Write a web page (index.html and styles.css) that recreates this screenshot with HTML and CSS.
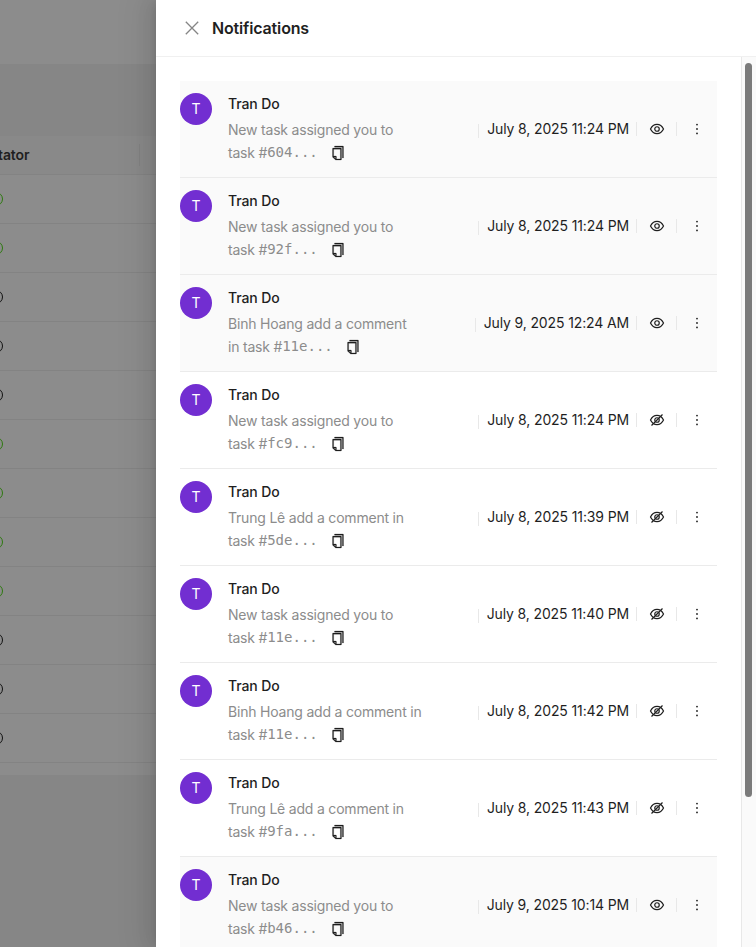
FILE: index.html
```html
<!DOCTYPE html>
<html lang="en">
<head>
<meta charset="utf-8">
<title>Notifications</title>
<link rel="stylesheet" href="styles.css">
</head>
<body>
<svg class="defs" aria-hidden="true">
  <symbol id="copy" viewBox="0 0 1024 1024"><path stroke="currentColor" stroke-width="14" d="M832 64H296c-4.400 0-8 3.600-8 8v56c0 4.400 3.600 8 8 8h496v688c0 4.400 3.600 8 8 8h56c4.400 0 8-3.600 8-8V96c0-17.700-14.300-32-32-32zM704 192H192c-17.700 0-32 14.300-32 32v530.700c0 8.500 3.400 16.600 9.400 22.600l173.300 173.300c2.200 2.200 4.700 4 7.400 5.500v1.900h4.200c3.500 1.300 7.200 2 11 2H704c17.700 0 32-14.300 32-32V224c0-17.700-14.300-32-32-32zM350 856.200L263.900 770H350v86.200zM664 888H414V746c0-22.100-17.900-40-40-40H232V264h432v624z"/></symbol>
  <symbol id="eye" viewBox="0 0 16 16"><g fill="none" stroke="currentColor" stroke-width="1.200"><path d="M1.500 8C3 4.900 5.100 3.400 8 3.400S13 4.900 14.500 8C13 11.100 10.900 12.600 8 12.600S3 11.100 1.500 8z"/><circle cx="8" cy="8" r="2.250"/></g></symbol>
  <symbol id="eye-off" viewBox="0 0 16 16"><g fill="none" stroke="currentColor" stroke-width="1.200"><path d="M1.500 8C3 4.900 5.100 3.400 8 3.400S13 4.900 14.500 8C13 11.100 10.900 12.600 8 12.600S3 11.100 1.500 8z"/><circle cx="8" cy="8" r="2.250"/><path d="M2.500 13.500L13.500 2.500"/></g></symbol>
  <symbol id="more" viewBox="0 0 16 16"><circle cx="8" cy="3.600" r=".9"/><circle cx="8" cy="8" r=".9"/><circle cx="8" cy="12.400" r=".9"/></symbol>
</svg>
<div class="app">
  <main class="page">
    <div class="topbar"></div>
    <div class="table">
      <div class="thead">tator</div>
      <div class="row"><i class="ring green"></i></div>
      <div class="row"><i class="ring green"></i></div>
      <div class="row"><i class="ring"></i></div>
      <div class="row"><i class="ring"></i></div>
      <div class="row"><i class="ring"></i></div>
      <div class="row"><i class="ring green"></i></div>
      <div class="row"><i class="ring green"></i></div>
      <div class="row"><i class="ring green"></i></div>
      <div class="row"><i class="ring green"></i></div>
      <div class="row"><i class="ring"></i></div>
      <div class="row"><i class="ring"></i></div>
      <div class="row"><i class="ring"></i></div>
      <div class="tfoot"></div>
    </div>
  </main>
  <aside class="drawer">
    <header class="head">
      <svg class="close" viewBox="0 0 16 16"><path d="M1.800 1.800l12.400 12.400M14.200 1.800L1.800 14.200"/></svg>
      <h1>Notifications</h1>
    </header>
    <div class="body">
      <ul class="list" id="list"></ul>
      <div class="track"><div class="thumb"></div></div>
    </div>
  </aside>
</div>
<script src="list.js"></script>
</body>
</html>
```
FILE: styles.css
```css
* { box-sizing: border-box; }
body { margin: 0; font: 14px/22px Inter, "Liberation Sans", sans-serif; color: #1f1f1f; overflow: hidden; }
.defs { display: none; }
.app { display: flex; height: 947px; }
.page { width: 156px; background: #868686; overflow: hidden; }
.topbar { height: 64px; background: #8c8c8c; }
.table { margin-top: 72px; background: #8c8c8c; }
.thead { height: 39px; padding-top: 8px; font-weight: 600; background: linear-gradient(#808080, #808080) 139px 8px / 1px 22px no-repeat #898989; border-bottom: 1px solid #838383; text-indent: -2px; letter-spacing: -.1px; }
.row { height: 49px; border-bottom: 1px solid #838383; display: flex; align-items: center; }
.ring { width: 14px; height: 14px; margin-left: -11px; border: 1.3px solid #111; border-radius: 50%; }
.green { border-color: #2d7a0e; }
.tfoot { height: 12px; }
.drawer { position: relative; width: 600px; display: flex; flex-direction: column; background: #fff; box-shadow: -6px 0 16px 0 rgba(0,0,0,.08), -3px 0 6px -4px rgba(0,0,0,.12), -9px 0 28px 8px rgba(0,0,0,.05); }
.head { flex: none; height: 57px; display: flex; align-items: center; gap: 12px; padding-left: 28px; border-bottom: 1px solid #f0f0f0; }
.close { width: 16px; height: 16px; fill: none; stroke: #858585; stroke-width: 1.3; }
h1 { margin: 0; font-size: 16px; line-height: 24px; font-weight: 600; letter-spacing: -.16px; }
.body { flex: 1; min-height: 0; display: flex; }
.list { width: 585px; margin: 0; padding: 24px 24px 0; list-style: none; overflow: hidden; }
.item { height: 97px; display: flex; align-items: center; border-bottom: 1px solid #ebebeb; }
.shade { background: #fafafa; }
.avatar { width: 32px; height: 32px; flex: none; align-self: flex-start; margin: 12px 16px 0 0; border-radius: 50%; background: #722ed1; color: #fff; line-height: 32px; text-align: center; }
.meta { flex: 1; align-self: flex-start; padding-top: 12px; }
.name { font-weight: 500; margin-bottom: 3px; letter-spacing: -.1px; }
.desc { color: #8c8c8c; line-height: 23px; white-space: nowrap; letter-spacing: -.2px; }
.desc div { display: flex; align-items: center; height: 23px; white-space: pre; }
.hash { font-family: "DejaVu Sans Mono", monospace; letter-spacing: 0; }
.icon { width: 16px; height: 16px; fill: currentColor; color: #1f1f1f; }
.desc .icon { margin-left: 12px; }
.when { padding-left: 9px; margin-right: 7px; letter-spacing: -.13px; background: linear-gradient(#e8e8e8, #e8e8e8) 0 6px / 1px 14px no-repeat; }
.act { width: 40px; height: 22px; padding-left: 2px; display: flex; align-items: center; justify-content: center; background: linear-gradient(#e8e8e8, #e8e8e8) 0 4px / 1px 14px no-repeat; }
.act:last-child { width: 41px; padding-left: 1px; }
.track { width: 15px; padding: 6px 0 0 3px; background: #fafafa; border-left: 1px solid #e8e8e8; }
.thumb { width: 7px; height: 734px; border-radius: 4px; background: #7b7b7b; }
```
FILE: list.js
```js
const items = [
  ["New task assigned you to", "task #", "604...", "July 8, 2025 11:24 PM", true],
  ["New task assigned you to", "task #", "92f...", "July 8, 2025 11:24 PM", true],
  ["Binh Hoang add a comment", "in task #", "11e...", "July 9, 2025 12:24 AM", true],
  ["New task assigned you to", "task #", "fc9...", "July 8, 2025 11:24 PM", false],
  ["Trung Lê add a comment in", "task #", "5de...", "July 8, 2025 11:39 PM", false],
  ["New task assigned you to", "task #", "11e...", "July 8, 2025 11:40 PM", false],
  ["Binh Hoang add a comment in", "task #", "11e...", "July 8, 2025 11:42 PM", false],
  ["Trung Lê add a comment in", "task #", "9fa...", "July 8, 2025 11:43 PM", false],
  ["New task assigned you to", "task #", "b46...", "July 9, 2025 10:14 PM", true]
];
const icon = name => `<svg class="icon"><use href="#${name}"/></svg>`;
document.getElementById("list").innerHTML = items.map(([first, second, hash, when, seen]) => `
  <li class="item${seen ? " shade" : ""}">
    <div class="avatar">T</div>
    <div class="meta">
      <div class="name">Tran Do</div>
      <div class="desc"><div>${first}</div><div><span>${second}</span><span class="hash">${hash}</span>${icon("copy")}</div></div>
    </div>
    <div class="when">${when}</div>
    <div class="act">${icon(seen ? "eye" : "eye-off")}</div>
    <div class="act">${icon("more")}</div>
  </li>`).join("");
```
